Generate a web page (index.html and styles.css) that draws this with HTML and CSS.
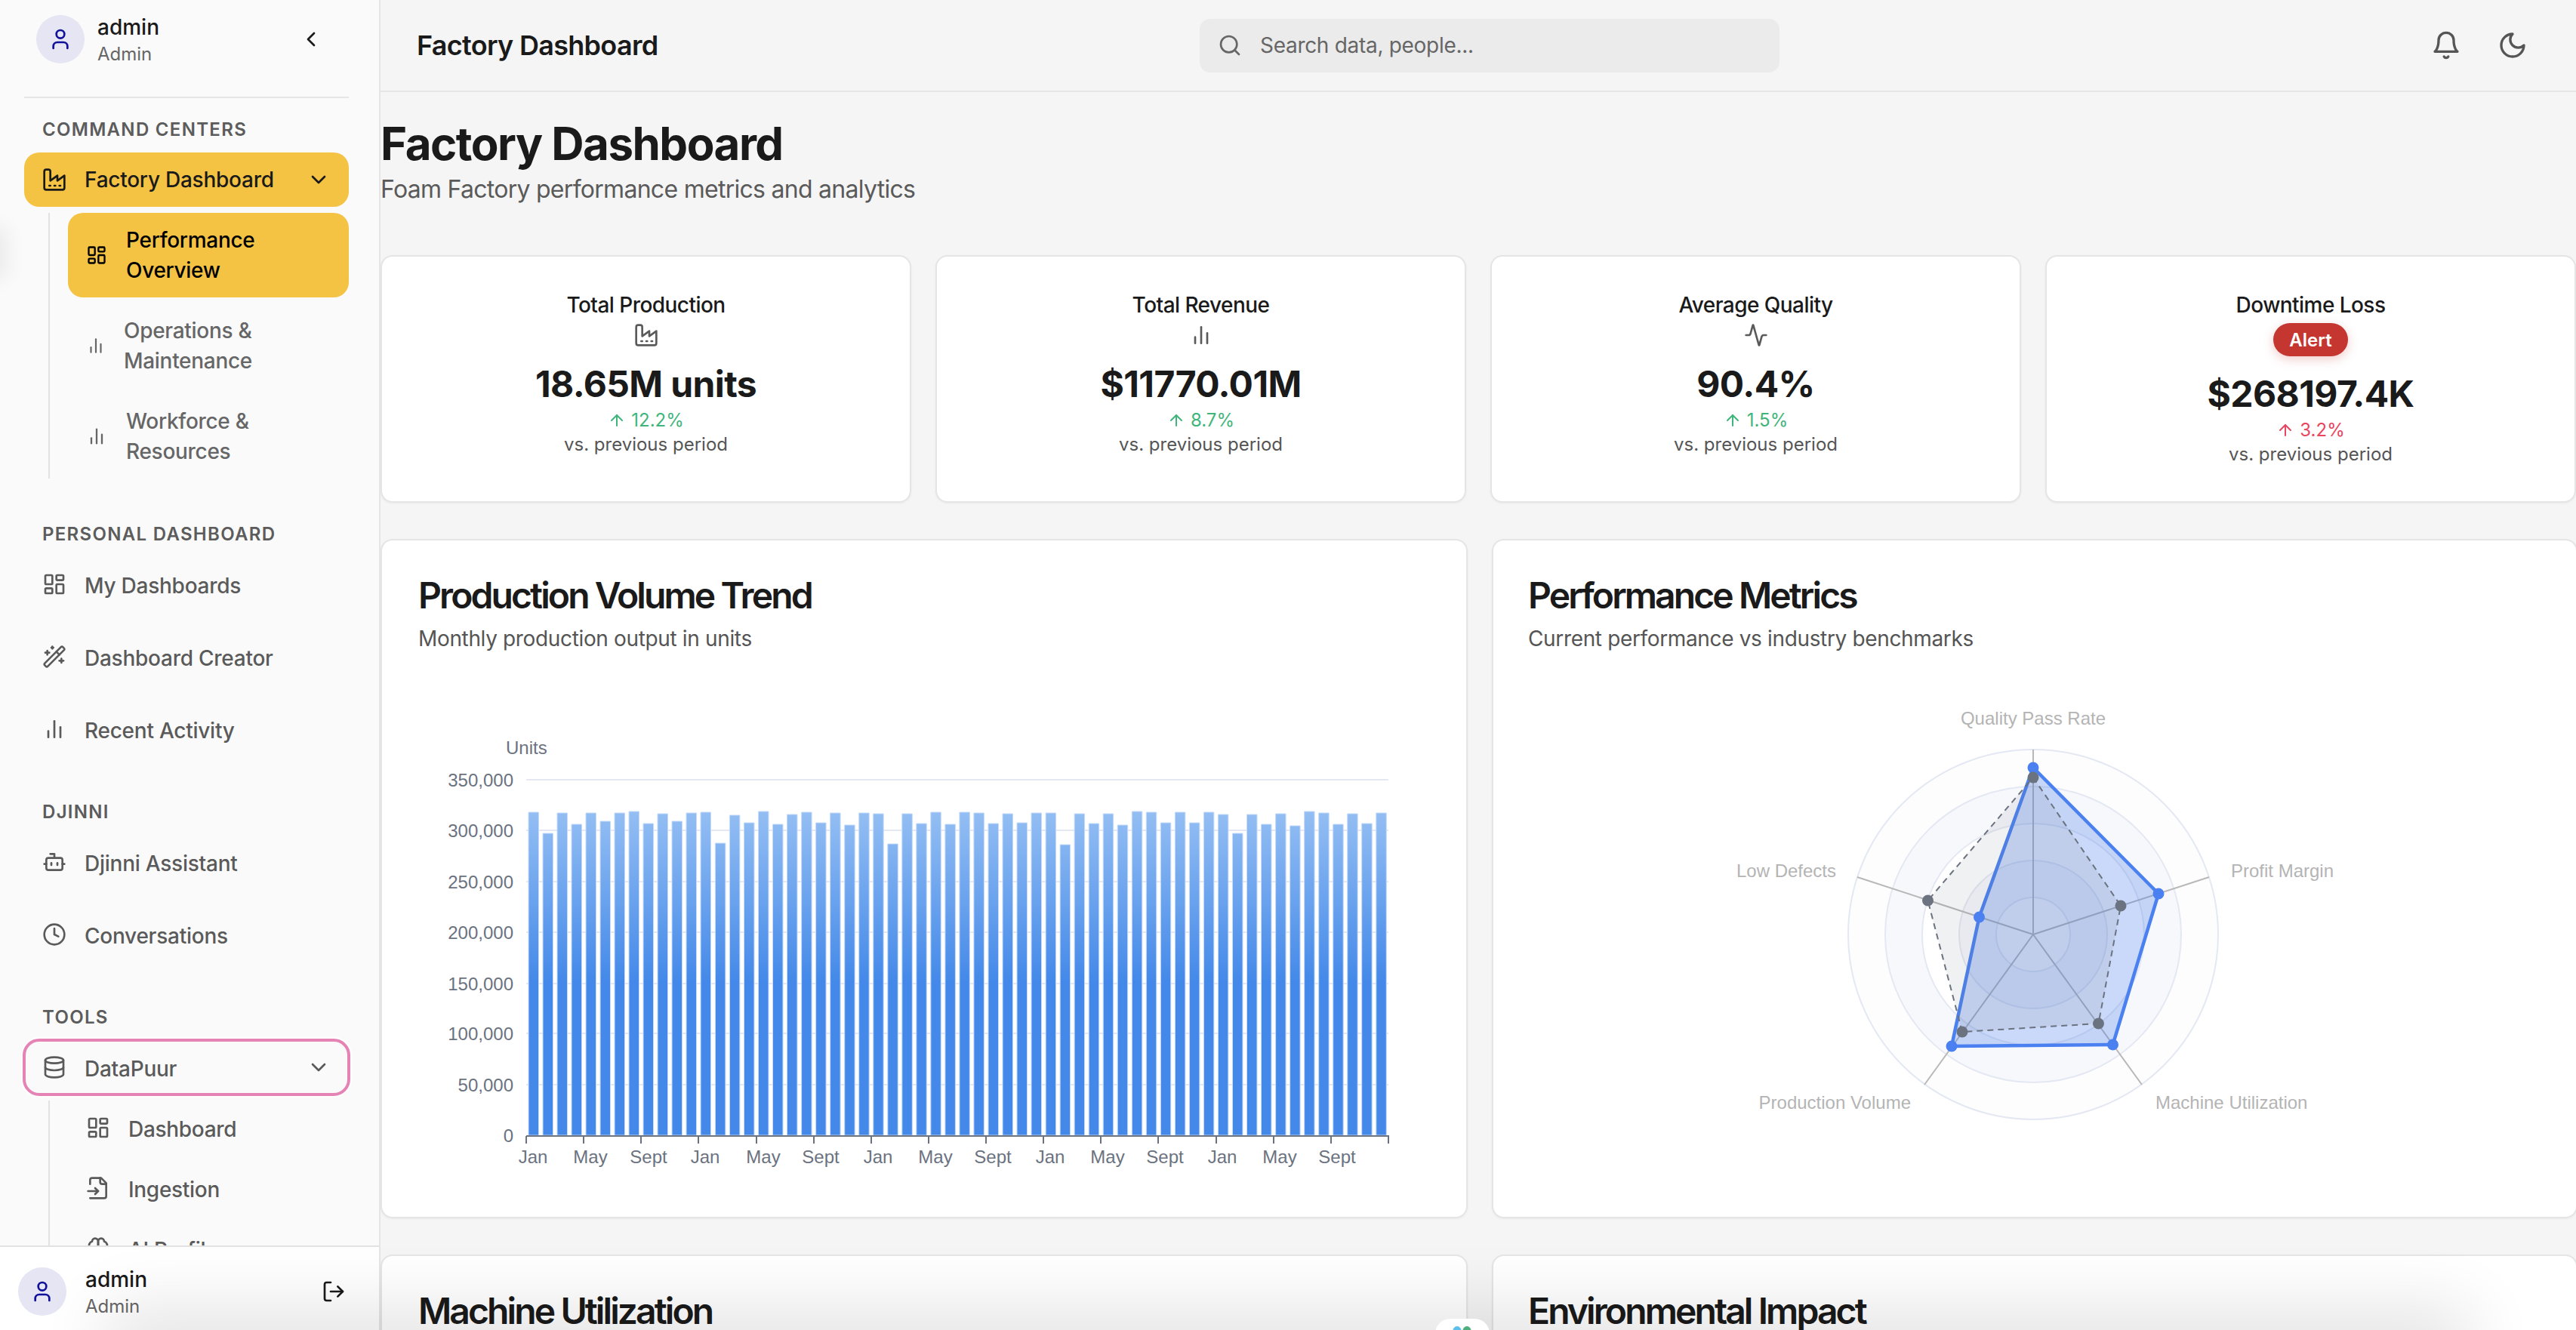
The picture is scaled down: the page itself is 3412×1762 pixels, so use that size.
FILE: index.html
```html
<!DOCTYPE html>
<html lang="en">
<head>
<meta charset="utf-8">
<title>Factory Dashboard</title>
<link rel="stylesheet" href="styles.css">
</head>
<body>
<svg class="sprite" aria-hidden="true">
  <symbol id="i-user" viewBox="0 0 24 24"><path d="M19 21v-2a4 4 0 0 0-4-4H9a4 4 0 0 0-4 4v2"/><circle cx="12" cy="7" r="4"/></symbol>
  <symbol id="i-left" viewBox="0 0 24 24"><path d="m15 18-6-6 6-6"/></symbol>
  <symbol id="i-down" viewBox="0 0 24 24"><path d="m6 9 6 6 6-6"/></symbol>
  <symbol id="i-factory" viewBox="0 0 24 24"><path d="M2 20a2 2 0 0 0 2 2h16a2 2 0 0 0 2-2V8l-7 5V8l-7 5V4a2 2 0 0 0-2-2H4a2 2 0 0 0-2 2Z"/><path d="M17 18h1"/><path d="M12 18h1"/><path d="M7 18h1"/></symbol>
  <symbol id="i-dash" viewBox="0 0 24 24"><rect x="3" y="3" width="7" height="9" rx="1"/><rect x="14" y="3" width="7" height="5" rx="1"/><rect x="14" y="12" width="7" height="9" rx="1"/><rect x="3" y="16" width="7" height="5" rx="1"/></symbol>
  <symbol id="i-bars" viewBox="0 0 24 24"><path d="M18 20V10"/><path d="M12 20V4"/><path d="M6 20v-6"/></symbol>
  <symbol id="i-wand" viewBox="0 0 24 24"><path d="m21.64 3.64-1.28-1.28a1.21 1.21 0 0 0-1.72 0L2.36 18.64a1.21 1.21 0 0 0 0 1.72l1.28 1.28a1.2 1.2 0 0 0 1.72 0L21.64 5.36a1.2 1.2 0 0 0 0-1.72"/><path d="m14 7 3 3"/><path d="M5 6v4"/><path d="M19 14v4"/><path d="M10 2v2"/><path d="M7 8H3"/><path d="M21 16h-4"/><path d="M11 3H9"/></symbol>
  <symbol id="i-bot" viewBox="0 0 24 24"><path d="M12 8V4H8"/><rect x="4" y="8" width="16" height="12" rx="2"/><path d="M2 14h2"/><path d="M20 14h2"/><path d="M15 13v2"/><path d="M9 13v2"/></symbol>
  <symbol id="i-clock" viewBox="0 0 24 24"><circle cx="12" cy="12" r="10"/><path d="M12 6v6l4 2"/></symbol>
  <symbol id="i-db" viewBox="0 0 24 24"><ellipse cx="12" cy="5" rx="9" ry="3"/><path d="M3 5V19A9 3 0 0 0 21 19V5"/><path d="M3 12A9 3 0 0 0 21 12"/></symbol>
  <symbol id="i-file" viewBox="0 0 24 24"><path d="M4 22h14a2 2 0 0 0 2-2V7l-5-5H6a2 2 0 0 0-2 2v4"/><path d="M14 2v4a2 2 0 0 0 2 2h4"/><path d="M2 15h10"/><path d="m9 18 3-3-3-3"/></symbol>
  <symbol id="i-brain" viewBox="0 0 24 24"><path d="M12 5a3 3 0 1 0-5.997.125 4 4 0 0 0-2.526 5.77 4 4 0 0 0 .556 6.588A4 4 0 1 0 12 18Z"/><path d="M12 5a3 3 0 1 1 5.997.125 4 4 0 0 1 2.526 5.77 4 4 0 0 1-.556 6.588A4 4 0 1 1 12 18Z"/></symbol>
  <symbol id="i-logout" viewBox="0 0 24 24"><path d="M9 21H5a2 2 0 0 1-2-2V5a2 2 0 0 1 2-2h4"/><path d="m16 17 5-5-5-5"/><path d="M21 12H9"/></symbol>
  <symbol id="i-search" viewBox="0 0 24 24"><circle cx="11" cy="11" r="8"/><path d="m21 21-4.3-4.3"/></symbol>
  <symbol id="i-bell" viewBox="0 0 24 24"><path d="M6 8a6 6 0 0 1 12 0c0 7 3 9 3 9H3s3-2 3-9"/><path d="M10.3 21a1.94 1.94 0 0 0 3.4 0"/></symbol>
  <symbol id="i-moon" viewBox="0 0 24 24"><path d="M12 3a6 6 0 0 0 9 9 9 9 0 1 1-9-9Z"/></symbol>
  <symbol id="i-activity" viewBox="0 0 24 24"><path d="M22 12h-2.48a2 2 0 0 0-1.93 1.46l-2.35 8.36a.25.25 0 0 1-.48 0L9.24 2.18a.25.25 0 0 0-.48 0l-2.35 8.36A2 2 0 0 1 4.49 12H2"/></symbol>
  <symbol id="i-up" viewBox="0 0 24 24"><path d="m5 12 7-7 7 7"/><path d="M12 19V5"/></symbol>
</svg>

<div class="app">
  <aside class="sidebar">
    <div class="side-top">
      <div class="identity">
        <span class="avatar"><svg class="ico ico-32"><use href="#i-user"/></svg></span>
        <span class="who"><span class="who-name">admin</span><span class="who-role">Admin</span></span>
      </div>
      <svg class="ico ico-32 collapse"><use href="#i-left"/></svg>
    </div>

    <nav class="nav">
      <section class="group">
        <h3 class="group-title">COMMAND CENTERS</h3>
        <div class="item item-active"><svg class="ico ico-32"><use href="#i-factory"/></svg><span class="item-label">Factory Dashboard</span><svg class="ico ico-32 caret"><use href="#i-down"/></svg></div>
        <div class="subs">
          <div class="sub sub-active"><svg class="ico ico-28"><use href="#i-dash"/></svg><span class="sub-label sub-label-wide">Performance Overview</span></div>
          <div class="sub"><svg class="ico ico-26"><use href="#i-bars"/></svg><span class="sub-label sub-label-ops">Operations &amp; Maintenance</span></div>
          <div class="sub"><svg class="ico ico-28"><use href="#i-bars"/></svg><span class="sub-label sub-label-wide">Workforce &amp; Resources</span></div>
        </div>
      </section>

      <section class="group">
        <h3 class="group-title">PERSONAL DASHBOARD</h3>
        <div class="items">
          <div class="item"><svg class="ico ico-32"><use href="#i-dash"/></svg><span class="item-label">My Dashboards</span></div>
          <div class="item"><svg class="ico ico-32"><use href="#i-wand"/></svg><span class="item-label">Dashboard Creator</span></div>
          <div class="item"><svg class="ico ico-32"><use href="#i-bars"/></svg><span class="item-label">Recent Activity</span></div>
        </div>
      </section>

      <section class="group">
        <h3 class="group-title">DJINNI</h3>
        <div class="items">
          <div class="item"><svg class="ico ico-32"><use href="#i-bot"/></svg><span class="item-label">Djinni Assistant</span></div>
          <div class="item"><svg class="ico ico-32"><use href="#i-clock"/></svg><span class="item-label">Conversations</span></div>
        </div>
      </section>

      <section class="group">
        <h3 class="group-title">TOOLS</h3>
        <div class="item item-focus"><svg class="ico ico-32"><use href="#i-db"/></svg><span class="item-label">DataPuur</span><svg class="ico ico-32 caret"><use href="#i-down"/></svg></div>
        <div class="subs">
          <div class="sub sub-plain"><svg class="ico ico-32"><use href="#i-dash"/></svg><span class="sub-label">Dashboard</span></div>
          <div class="sub sub-plain"><svg class="ico ico-32"><use href="#i-file"/></svg><span class="sub-label">Ingestion</span></div>
          <div class="sub sub-plain"><svg class="ico ico-32"><use href="#i-brain"/></svg><span class="sub-label">AI Profile</span></div>
        </div>
      </section>
    </nav>

    <div class="side-foot">
      <span class="avatar"><svg class="ico ico-32"><use href="#i-user"/></svg></span>
      <span class="who"><span class="who-name">admin</span><span class="who-role">Admin</span></span>
      <svg class="ico ico-32 logout"><use href="#i-logout"/></svg>
    </div>
  </aside>

  <main class="main">
    <header class="topbar">
      <div class="topbar-title">Factory Dashboard</div>
      <div class="search"><svg class="ico ico-32"><use href="#i-search"/></svg><span>Search data, people...</span></div>
      <div class="actions">
        <svg class="ico ico-40"><use href="#i-bell"/></svg>
        <svg class="ico ico-40"><use href="#i-moon"/></svg>
      </div>
    </header>

    <div class="page-head">
      <h1 class="page-title">Factory Dashboard</h1>
      <p class="page-sub">Foam Factory performance metrics and analytics</p>
    </div>

    <div class="kpis">
      <article class="kpi">
        <div class="kpi-title">Total Production</div>
        <svg class="ico ico-32 kpi-icon"><use href="#i-factory"/></svg>
        <div class="kpi-value">18.65M units</div>
        <div class="delta delta-good"><svg class="ico ico-24"><use href="#i-up"/></svg>12.2%</div>
        <div class="kpi-note">vs. previous period</div>
      </article>
      <article class="kpi">
        <div class="kpi-title">Total Revenue</div>
        <svg class="ico ico-32 kpi-icon"><use href="#i-bars"/></svg>
        <div class="kpi-value">$11770.01M</div>
        <div class="delta delta-good"><svg class="ico ico-24"><use href="#i-up"/></svg>8.7%</div>
        <div class="kpi-note">vs. previous period</div>
      </article>
      <article class="kpi">
        <div class="kpi-title">Average Quality</div>
        <svg class="ico ico-32 kpi-icon"><use href="#i-activity"/></svg>
        <div class="kpi-value">90.4%</div>
        <div class="delta delta-good"><svg class="ico ico-24"><use href="#i-up"/></svg>1.5%</div>
        <div class="kpi-note">vs. previous period</div>
      </article>
      <article class="kpi">
        <div class="kpi-title">Downtime Loss</div>
        <span class="badge">Alert</span>
        <div class="kpi-value">$268197.4K</div>
        <div class="delta delta-bad"><svg class="ico ico-24"><use href="#i-up"/></svg>3.2%</div>
        <div class="kpi-note">vs. previous period</div>
      </article>
    </div>

    <div class="charts">
      <article class="card">
        <h2 class="card-title">Production Volume Trend</h2>
        <p class="card-sub">Monthly production output in units</p>
        <svg class="plot" viewBox="554 900 1340 680">
          <defs>
            <linearGradient id="barFill" gradientUnits="userSpaceOnUse" x1="0" y1="1072" x2="0" y2="1300">
              <stop offset="0" stop-color="#95bff3"/>
              <stop offset="1" stop-color="#4489e9"/>
            </linearGradient>
          </defs>
          <text class="axis-text" x="670" y="999">Units</text>
          <g class="grid-lines">
            <path d="M697 1033H1839M697 1100H1839M697 1168H1839M697 1235H1839M697 1303H1839M697 1369H1839M697 1437H1839"/>
          </g>
          <path class="bars" d="M700 1076h13.5V1504h-13.5zM719 1104h13.5V1504h-13.5zM738 1077h13.5V1504h-13.5zM757 1092h13.5V1504h-13.5zM776 1077h13.5V1504h-13.5zM795 1088h13.5V1504h-13.5zM814 1077h13.5V1504h-13.5zM833 1075h13.5V1504h-13.5zM852 1091h13.5V1504h-13.5zM871 1078h13.5V1504h-13.5zM890 1088h13.5V1504h-13.5zM909 1077h13.5V1504h-13.5zM928 1076h13.5V1504h-13.5zM947.4 1117h13.5V1504h-13.5zM966.4 1080h13.5V1504h-13.5zM985.5 1090h13.5V1504h-13.5zM1004.5 1075h13.5V1504h-13.5zM1023.5 1092h13.5V1504h-13.5zM1042.5 1079h13.5V1504h-13.5zM1061.6 1076h13.5V1504h-13.5zM1080.6 1090h13.5V1504h-13.5zM1099.6 1077h13.5V1504h-13.5zM1118.7 1093h13.5V1504h-13.5zM1137.7 1077h13.5V1504h-13.5zM1156.7 1078h13.5V1504h-13.5zM1175.8 1118h13.5V1504h-13.5zM1194.8 1078h13.5V1504h-13.5zM1213.8 1091h13.5V1504h-13.5zM1232.8 1076h13.5V1504h-13.5zM1251.9 1092h13.5V1504h-13.5zM1270.9 1076h13.5V1504h-13.5zM1289.9 1077h13.5V1504h-13.5zM1309 1091h13.5V1504h-13.5zM1328 1078h13.5V1504h-13.5zM1347 1090h13.5V1504h-13.5zM1366 1077h13.5V1504h-13.5zM1385.1 1077h13.5V1504h-13.5zM1404.1 1119h13.5V1504h-13.5zM1423.1 1078h13.5V1504h-13.5zM1442.2 1091h13.5V1504h-13.5zM1461.2 1078h13.5V1504h-13.5zM1480.2 1093h13.5V1504h-13.5zM1499.3 1075h13.5V1504h-13.5zM1518.3 1076h13.5V1504h-13.5zM1537.3 1090h13.5V1504h-13.5zM1556.4 1076h13.5V1504h-13.5zM1575.4 1090h13.5V1504h-13.5zM1594.4 1076h13.5V1504h-13.5zM1613.4 1079h13.5V1504h-13.5zM1632.5 1104h13.5V1504h-13.5zM1651.5 1079h13.5V1504h-13.5zM1670.5 1092h13.5V1504h-13.5zM1689.6 1078h13.5V1504h-13.5zM1708.6 1094h13.5V1504h-13.5zM1727.6 1075h13.5V1504h-13.5zM1746.7 1077h13.5V1504h-13.5zM1765.7 1092h13.5V1504h-13.5zM1784.7 1078h13.5V1504h-13.5zM1803.7 1091h13.5V1504h-13.5zM1822.8 1077h13.5V1504h-13.5z"/>
          <path class="axis-line" d="M697 1505H1840M697 1505v10M773 1505v10M849 1505v10M925 1505v10M1002 1505v10M1078 1505v10M1154 1505v10M1230 1505v10M1306 1505v10M1382 1505v10M1458 1505v10M1534 1505v10M1611 1505v10M1687 1505v10M1763 1505v10M1839 1505v10"/>
          <g class="axis-text axis-y">
            <text x="680" y="1042">350,000</text>
            <text x="680" y="1109">300,000</text>
            <text x="680" y="1177">250,000</text>
            <text x="680" y="1244">200,000</text>
            <text x="680" y="1312">150,000</text>
            <text x="680" y="1378">100,000</text>
            <text x="680" y="1446">50,000</text>
            <text x="680" y="1513">0</text>
          </g>
          <g class="axis-text axis-x">
            <text x="706" y="1541">Jan</text>
            <text x="782" y="1541">May</text>
            <text x="859" y="1541">Sept</text>
            <text x="934" y="1541">Jan</text>
            <text x="1011" y="1541">May</text>
            <text x="1087" y="1541">Sept</text>
            <text x="1163" y="1541">Jan</text>
            <text x="1239" y="1541">May</text>
            <text x="1315" y="1541">Sept</text>
            <text x="1391" y="1541">Jan</text>
            <text x="1467" y="1541">May</text>
            <text x="1543" y="1541">Sept</text>
            <text x="1619" y="1541">Jan</text>
            <text x="1695" y="1541">May</text>
            <text x="1771" y="1541">Sept</text>
          </g>
        </svg>
      </article>

      <article class="card card-right">
        <h2 class="card-title">Performance Metrics</h2>
        <p class="card-sub">Current performance vs industry benchmarks</p>
        <svg class="plot" viewBox="2024 900 1340 680">
          <circle class="ring ring-a" cx="2693" cy="1238" r="245"/>
          <circle class="ring ring-b" cx="2693" cy="1238" r="196"/>
          <circle class="ring ring-c" cx="2693" cy="1238" r="147"/>
          <circle class="ring ring-b" cx="2693" cy="1238" r="98"/>
          <circle class="ring ring-c" cx="2693" cy="1238" r="49"/>
          <path class="spokes" d="M2693 1238V993M2693 1238L2926 1162M2693 1238L2460 1162M2693 1238L2837 1437M2693 1238L2549 1437"/>
          <polygon class="poly-blue" points="2693,1017 2859,1184 2798.5,1384 2585,1386 2621.5,1215"/>
          <polygon class="poly-grey" points="2693,1030 2809,1200 2779.5,1356 2599,1367 2553.5,1193"/>
          <g class="dots-blue">
            <circle cx="2693" cy="1017" r="7.5"/><circle cx="2859" cy="1184" r="7.5"/><circle cx="2798.5" cy="1384" r="7.5"/><circle cx="2585" cy="1386" r="7.5"/><circle cx="2621.5" cy="1215" r="7.5"/>
          </g>
          <g class="dots-grey">
            <circle cx="2693" cy="1030" r="7.5"/><circle cx="2809" cy="1200" r="7.5"/><circle cx="2779.5" cy="1356" r="7.5"/><circle cx="2599" cy="1367" r="7.5"/><circle cx="2553.5" cy="1193" r="7.5"/>
          </g>
          <text class="radar-text anchor-mid" x="2693" y="960">Quality Pass Rate</text>
          <text class="radar-text" x="2955" y="1162">Profit Margin</text>
          <text class="radar-text anchor-end" x="2432" y="1162">Low Defects</text>
          <text class="radar-text anchor-end" x="2531" y="1469">Production Volume</text>
          <text class="radar-text" x="2855" y="1469">Machine Utilization</text>
        </svg>
      </article>

      <article class="card">
        <h2 class="card-title">Machine Utilization</h2>
      </article>
      <article class="card card-right">
        <h2 class="card-title">Environmental Impact</h2>
      </article>
    </div>
  </main>
</div>

<div class="edge-glow"></div>
<div class="floor-shadow"></div>
<div class="widget"><span class="drop drop-blue"></span><span class="drop drop-green"></span></div>
</body>
</html>
```

FILE: styles.css
```css
* { box-sizing: border-box; }

html, body {
  margin: 0;
  height: 100%;
  overflow: hidden;
}

body {
  font-family: Inter, "Liberation Sans", sans-serif;
  color: #1a1a1a;
  background: #f5f5f5;
}

.sprite { display: none; }

.ico {
  flex: none;
  fill: none;
  stroke: currentColor;
  stroke-width: 2;
  stroke-linecap: round;
  stroke-linejoin: round;
}
.ico-24 { width: 24px; height: 24px; }
.ico-26 { width: 26px; height: 26px; }
.ico-28 { width: 28px; height: 28px; }
.ico-32 { width: 32px; height: 32px; }
.ico-40 { width: 40px; height: 40px; }

.app {
  display: flex;
  height: 1762px;
}

/* Sidebar */
.sidebar {
  width: 504px;
  flex: none;
  display: flex;
  flex-direction: column;
  background: #fafafa;
  border-right: 2px solid #e5e5e5;
}

.side-top {
  display: flex;
  align-items: center;
  justify-content: space-between;
  margin: 0 40px 0 32px;
  padding: 20px 34px 44px 16px;
  border-bottom: 2px solid #e5e5e5;
  height: 130px;
  flex: none;
}

.identity { display: flex; align-items: center; gap: 17px; }

.avatar {
  width: 64px;
  height: 64px;
  flex: none;
  border-radius: 50%;
  background: #e5e5f3;
  color: #10109a;
  display: flex;
  align-items: center;
  justify-content: center;
}

.who { display: flex; flex-direction: column; padding-top: 4px; }
.who-name { font-size: 28px; line-height: 36px; font-weight: 500; color: #1a1a1a; }
.who-role { font-size: 24px; line-height: 36px; color: #666; }

.collapse { color: #1a1a1a; }

.nav {
  flex: 1;
  min-height: 0;
  overflow: hidden;
  padding: 24px 40px 0 32px;
}

.group { margin-bottom: 56px; }

.group-title {
  margin: 0 0 14px;
  padding: 2px 0 0 24px;
  font-size: 24px;
  line-height: 32px;
  font-weight: 600;
  letter-spacing: 1.3px;
  color: #5c5c5c;
}

.items { display: flex; flex-direction: column; gap: 24px; }

.item {
  height: 72px;
  display: flex;
  align-items: center;
  gap: 24px;
  padding: 0 24px;
  border-radius: 20px;
  font-size: 28px;
  font-weight: 500;
  letter-spacing: -0.25px;
  color: #5a5a5a;
}
.item-label { flex: 1; padding-top: 3px; }
.caret { color: inherit; }

.item-active { background: #f5c344; color: #1a1a1a; }
.item-active .item-label { padding-top: 0; }

.item-focus {
  outline: 4px solid #e583b4;
  outline-offset: -2px;
  box-shadow: 0 0 0 4px #fff;
}

.subs {
  margin: 8px 0 0 32px;
  padding-left: 24px;
  border-left: 2px solid #e2e2e2;
  display: flex;
  flex-direction: column;
  gap: 8px;
}

.sub {
  min-height: 112px;
  display: flex;
  align-items: center;
  gap: 24px;
  padding: 0 24px;
  border-radius: 20px;
  font-size: 28px;
  line-height: 40px;
  font-weight: 500;
  letter-spacing: -0.3px;
  color: #666;
}
.sub-active { background: #f5c344; color: #000; }
.sub-label-wide { margin-left: 1px; max-width: 250px; }
.sub-label-ops { max-width: 250px; }
.sub-plain { min-height: 72px; color: #5a5a5a; gap: 24px; }
.sub-plain .sub-label { padding-top: 3px; }

.side-foot {
  flex: none;
  height: 112px;
  padding: 8px 44px 0 24px;
  display: flex;
  align-items: center;
  gap: 25px;
  background: #fff;
  border-top: 2px solid #e2e2e2;
}
.side-foot .who { flex: 1; }
.logout { color: #1a1a1a; }

/* Main */
.main {
  flex: 1;
  min-width: 0;
  overflow: hidden;
}

.topbar {
  height: 122px;
  display: flex;
  align-items: center;
  border-bottom: 2px solid #e5e5e5;
  padding-right: 64px;
}

.topbar-title {
  width: 1085px;
  padding-left: 48px;
  font-size: 36px;
  font-weight: 600;
  letter-spacing: -0.7px;
}

.search {
  width: 768px;
  height: 71px;
  display: flex;
  align-items: center;
  gap: 24px;
  padding-left: 24px;
  background: #ebebeb;
  border-radius: 14px;
  font-size: 28px;
  letter-spacing: -0.3px;
  color: #666;
}

.actions {
  margin-left: auto;
  display: flex;
  gap: 48px;
  color: #555;
}

.page-head { padding-top: 32px; }

.page-title {
  margin: 0;
  font-size: 60px;
  line-height: 72px;
  font-weight: 700;
  letter-spacing: -1.5px;
}

.page-sub {
  margin: 0;
  padding-top: 1px;
  font-size: 32px;
  line-height: 47px;
  letter-spacing: -0.72px;
  color: #5a5a5a;
}

.kpis {
  margin-top: 64px;
  display: grid;
  grid-template-columns: repeat(4, 1fr);
  gap: 32px;
}

.kpi {
  display: flex;
  flex-direction: column;
  align-items: center;
  padding: 44px 24px 46px;
  background: #fff;
  border: 2px solid #e5e5e5;
  border-radius: 16px;
  box-shadow: 0 1px 3px rgba(0, 0, 0, .05);
}

.kpi-title {
  font-size: 28px;
  line-height: 40px;
  font-weight: 500;
  letter-spacing: -0.55px;
  margin-bottom: 4px;
}

.kpi-icon { color: #5a5a5a; margin-bottom: 17px; }

.kpi-value {
  font-size: 48px;
  line-height: 64px;
  font-weight: 700;
  letter-spacing: -0.6px;
}

.delta {
  display: flex;
  align-items: center;
  gap: 7px;
  font-size: 24px;
  line-height: 32px;
}
.delta-good { color: #3fb57b; }
.delta-bad { color: #e8455f; }

.kpi-note {
  font-size: 24px;
  line-height: 32px;
  color: #555;
}

.badge {
  height: 44px;
  width: 99px;
  margin-bottom: 18px;
  display: flex;
  align-items: center;
  justify-content: center;
  background: #c53630;
  color: #fff;
  border-radius: 22px;
  font-size: 24px;
  font-weight: 600;
  box-shadow: 0 4px 14px rgba(197, 54, 48, .25);
}

.charts {
  margin-top: 48px;
  display: grid;
  grid-template-columns: 1fr 1fr;
  gap: 48px 32px;
}

.card {
  padding: 42px 48px 32px;
  background: #fff;
  border: 2px solid #e5e5e5;
  border-radius: 16px;
  box-shadow: 0 1px 3px rgba(0, 0, 0, .05);
}
.card-right { padding-left: 46px; }

.card-title {
  margin: 0;
  padding-top: 2px;
  font-size: 48px;
  line-height: 58px;
  font-weight: 600;
  letter-spacing: -2.9px;
}

.card-sub {
  margin: 8px 0 0;
  font-size: 28px;
  line-height: 40px;
  letter-spacing: -0.35px;
  color: #555;
}

.plot {
  display: block;
  margin-top: 34px;
  width: 1340px;
  height: 680px;
}

.axis-text, .axis-text text {
  font-family: "Liberation Sans", Arial, sans-serif;
  font-size: 24px;
  fill: #6b7280;
}
.axis-y text { text-anchor: end; }
.axis-x text { text-anchor: middle; }

.grid-lines path { fill: none; stroke: #e5e8f3; stroke-width: 2; }
.bars { fill: url(#barFill); stroke: #c6dcf9; stroke-width: 1; }
.axis-line { fill: none; stroke: #6b7280; stroke-width: 2; }

.ring { stroke: #e4e8f3; stroke-width: 2; }
.ring-a { fill: #fdfdfe; }
.ring-b { fill: #f7f8fc; }
.ring-c { fill: #fff; }
.spokes { fill: none; stroke: #b8b8b8; stroke-width: 2; }
.poly-blue { fill: rgba(66, 120, 235, .28); stroke: #4a80f0; stroke-width: 4.5; stroke-linejoin: round; }
.poly-grey { fill: rgba(107, 114, 128, .1); stroke: #6b7280; stroke-width: 2; stroke-dasharray: 8 6; }
.dots-blue { fill: #4a80f0; }
.dots-grey { fill: #6b7280; }
.radar-text {
  font-family: "Liberation Sans", Arial, sans-serif;
  font-size: 24px;
  fill: #b4b4b4;
}
.anchor-mid { text-anchor: middle; }
.anchor-end { text-anchor: end; }

/* Overlays */
.floor-shadow {
  position: fixed;
  left: 170px;
  right: 170px;
  bottom: -40px;
  height: 40px;
  box-shadow: 0 0 90px 30px rgba(0, 0, 0, .11);
  pointer-events: none;
}

.edge-glow {
  position: fixed;
  left: -30px;
  top: 310px;
  width: 30px;
  height: 50px;
  box-shadow: 0 0 28px 8px rgba(0, 0, 0, .07);
  pointer-events: none;
}

.widget {
  position: fixed;
  left: 1901px;
  top: 1747px;
  width: 72px;
  height: 40px;
  background: #fff;
  border-radius: 20px;
}

.drop {
  position: absolute;
  top: 10px;
  width: 12px;
  height: 16px;
  border-radius: 50%;
}
.drop-blue { left: 23px; background: #5bc0eb; }
.drop-green { left: 36px; background: #4caf7d; }
```
